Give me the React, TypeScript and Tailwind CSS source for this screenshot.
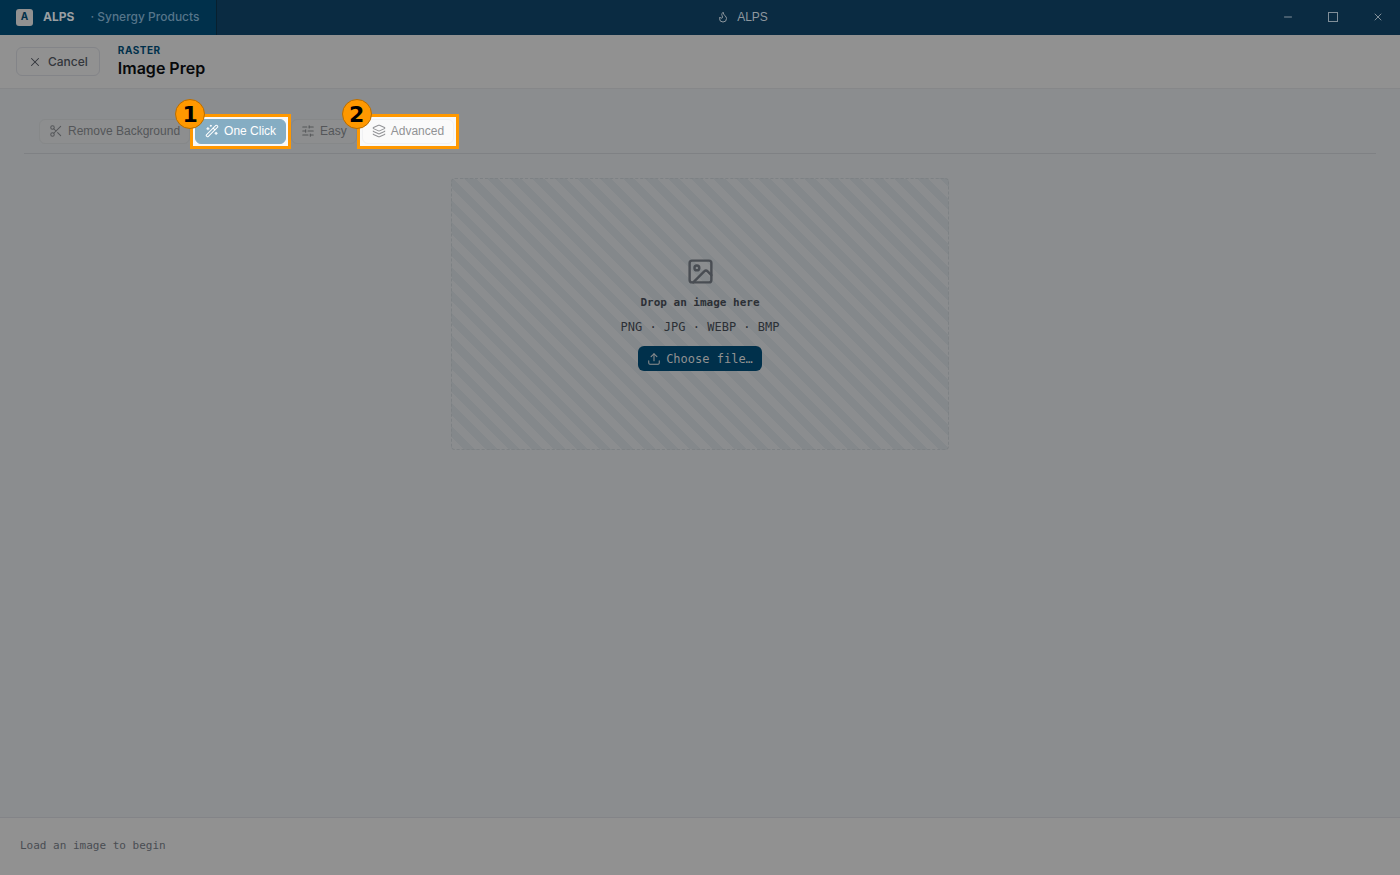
import React from 'react';
import { X, Scissors, WandSparkles, SlidersHorizontal, Layers, Image, Upload, Flame, Minus } from 'lucide-react';
import type { LucideIcon } from 'lucide-react';

interface Tab {
  label: string;
  icon: LucideIcon;
  active?: boolean;
  step?: number;
}

const tabs: Tab[] = [
  { label: 'Remove Background', icon: Scissors },
  { label: 'One Click', icon: WandSparkles, active: true, step: 1 },
  { label: 'Easy', icon: SlidersHorizontal },
  { label: 'Advanced', icon: Layers, step: 2 },
];

const tabStyle = (tab: Tab) => {
  if (tab.active) return 'bg-[#85adc3] border-[#85adc3] text-white';
  if (tab.step) return 'bg-[#fafafa] border-[#f0f1f3] text-[#919295]';
  return 'bg-[#8d8e8f] border-[#868889] text-[#545659]';
};

const TabButton: React.FC<{ tab: Tab }> = ({ tab }) => {
  const Icon = tab.icon;
  return (
    <div className="relative">
      {tab.step && <div className="absolute -inset-[5px] border-3 border-[#ff9800] bg-[#f8f9fa]" />}
      <button
        type="button"
        role="tab"
        aria-selected={!!tab.active}
        className={`relative flex h-[25px] items-center gap-[5px] rounded-md border px-[9px] pb-px font-['Liberation_Sans',Arial,sans-serif] text-xs ${tabStyle(tab)}`}
      >
        <Icon className="size-3.5" strokeWidth={1.75} />
        <span>{tab.label}</span>
      </button>
      {tab.step && (
        <span className="absolute -top-5 -left-5 flex size-[30px] items-center justify-center rounded-full border border-[#b96d00] bg-[#ff9800] font-['DejaVu_Sans',sans-serif] text-[22px] font-bold text-black">
          {tab.step}
        </span>
      )}
    </div>
  );
};

const TitleBar: React.FC = () => (
  <div className="flex h-[35px] shrink-0 bg-[#0a2b42] text-xs text-[#8f989f]">
    <div className="flex w-[217px] items-center border-r border-[#08202f] bg-[#00304b] pb-px pl-4">
      <span className="flex size-[17px] items-center justify-center rounded-[3px] bg-[#919191] text-[10px] font-bold text-[#00304b]">
        A
      </span>
      <span className="ml-2.5 font-bold text-[#9a9fa2]">ALPS</span>
      <span className="ml-4 font-medium text-[#56758a]">· Synergy Products</span>
    </div>
    <div className="flex flex-1 items-center justify-center pr-3.5 pb-px font-['Liberation_Sans',Arial,sans-serif]">
      <Flame className="mr-2 size-3" strokeWidth={2} />
      <span>ALPS</span>
    </div>
    <div className="flex items-center gap-[33px] pr-4 pb-px text-[#818f99]">
      <button type="button" aria-label="Minimize"><Minus className="size-3" strokeWidth={2} /></button>
      <button type="button" aria-label="Maximize">
        <svg viewBox="0 0 12 12" className="size-3" fill="none" stroke="currentColor">
          <rect x="1.5" y="1.5" width="9" height="9" />
        </svg>
      </button>
      <button type="button" aria-label="Close"><X className="size-3" strokeWidth={2} /></button>
    </div>
  </div>
);

const App: React.FC = () => (
  <div className="flex min-h-screen flex-col bg-[#8b8d8f] font-['Inter',sans-serif]">
    <TitleBar />

    <header className="flex h-[54px] shrink-0 items-center gap-[18px] border-b border-[#868789] bg-[#919191] px-4">
      <button
        type="button"
        className="flex h-[29px] items-center gap-1.5 rounded-md border border-[#838488] px-[11px] text-xs font-medium text-[#33363c]"
      >
        <X className="size-3.5" strokeWidth={1.75} />
        Cancel
      </button>
      <div>
        <div className="text-[10px] leading-3 font-bold tracking-wider text-[#00304b]">RASTER</div>
        <h1 className="text-base leading-6 font-semibold text-[#08090b]">Image Prep</h1>
      </div>
    </header>

    <main className="flex-1 px-6 pt-[30px]">
      <div role="tablist" className="flex gap-[5px] border-b border-[#7f8184] pb-[9px] pl-[15px]">
        {tabs.map((tab) => (
          <TabButton key={tab.label} tab={tab} />
        ))}
      </div>

      <div className="mx-auto mt-6 flex h-[272px] max-w-[498px] flex-col items-center justify-center rounded border border-dashed border-[#7d8184] bg-[repeating-linear-gradient(45deg,#8b8d8f_0_8px,#84888b_8px_16px)] font-['DejaVu_Sans_Mono',monospace] text-[#2c3036]">
        <Image className="size-[29px] text-[#494d53]" strokeWidth={2} />
        <p className="mt-[9px] text-[11px] leading-4 font-bold">Drop an image here</p>
        <p className="mt-2 text-xs leading-4">PNG · JPG · WEBP · BMP</p>
        <button
          type="button"
          className="mt-[11px] flex h-[25px] items-center gap-[5px] rounded-md bg-[#00304b] px-[9px] text-xs text-[#919191]"
        >
          <Upload className="size-3.5" strokeWidth={1.75} />
          Choose file…
        </button>
      </div>
    </main>

    <footer className="flex h-[58px] shrink-0 items-center border-t border-[#838488] bg-[#919191] px-5 font-['DejaVu_Sans_Mono',monospace] text-[11px] text-[#494d53]">
      Load an image to begin
    </footer>
  </div>
);

export default App;
